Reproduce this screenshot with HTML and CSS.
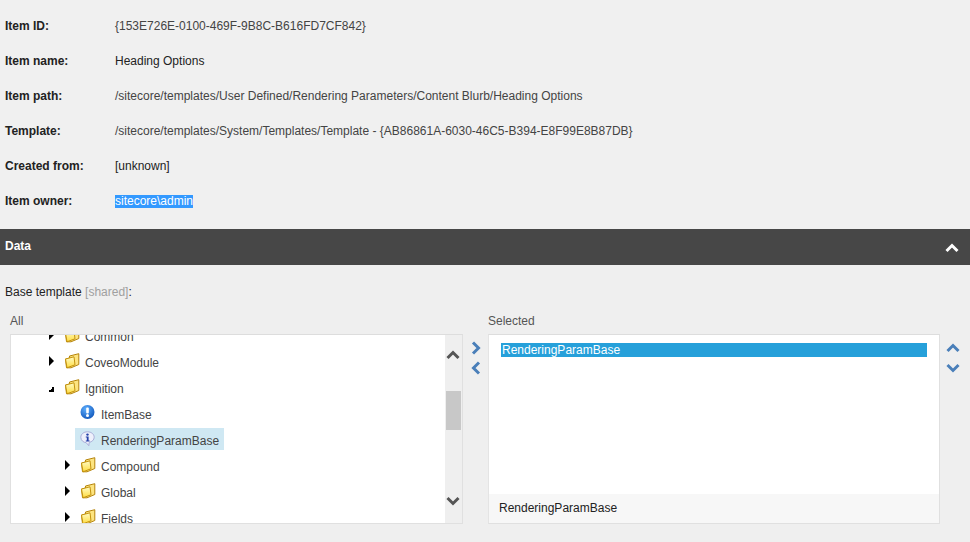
FILE: index.html
```html
<!DOCTYPE html>
<html lang="en">
<head>
<meta charset="utf-8">
<title>Heading Options</title>
<link rel="stylesheet" href="styles.css">
</head>
<body>
<svg class="defs" width="0" height="0" aria-hidden="true">
  <defs>
    <linearGradient id="fold" x1="0" y1="0" x2="0" y2="1"><stop offset="0" stop-color="#fffcc8"/><stop offset="1" stop-color="#ffdc3e"/></linearGradient>
    <symbol id="folder" viewBox="0 0 16 16">
      <path d="M1.500 6 5.500 5V3L14.800.700V11.500L7 14.800H2.500z" fill="#fde480" stroke="#b5840c"/>
      <path d="M1.500 6 10 3.800 11 11.800 3 14.800z" fill="url(#fold)" stroke="#c4920c"/>
    </symbol>
    <symbol id="chev-up" viewBox="0 0 14 10"><path d="M1.500 8 7 2.500 12.500 8" fill="none" stroke="currentColor" stroke-width="3"/></symbol>
    <symbol id="chev-down" viewBox="0 0 14 10"><path d="M1.500 2 7 7.500 12.500 2" fill="none" stroke="currentColor" stroke-width="3"/></symbol>
    <symbol id="chev-right" viewBox="0 0 10 14"><path d="M2 1.500 7.500 7 2 12.500" fill="none" stroke="currentColor" stroke-width="3"/></symbol>
    <symbol id="chev-left" viewBox="0 0 10 14"><path d="M8 1.500 2.500 7 8 12.500" fill="none" stroke="currentColor" stroke-width="3"/></symbol>
  </defs>
</svg>

<dl class="info">
  <div class="info-row"><dt>Item ID:</dt><dd class="muted">{153E726E-0100-469F-9B8C-B616FD7CF842}</dd></div>
  <div class="info-row"><dt>Item name:</dt><dd>Heading Options</dd></div>
  <div class="info-row"><dt>Item path:</dt><dd class="muted">/sitecore/templates/User Defined/Rendering Parameters/Content Blurb/Heading Options</dd></div>
  <div class="info-row"><dt>Template:</dt><dd class="muted">/sitecore/templates/System/Templates/Template - {AB86861A-6030-46C5-B394-E8F99E8B87DB}</dd></div>
  <div class="info-row"><dt>Created from:</dt><dd>[unknown]</dd></div>
  <div class="info-row"><dt>Item owner:</dt><dd><span class="selected-text">sitecore\admin</span></dd></div>
</dl>

<header class="section-bar">
  <span class="bar-title">Data</span>
  <svg class="bar-chevron"><use href="#chev-up"/></svg>
</header>

<section class="field">
  <div class="field-label">Base template <span class="shared">[shared]</span>:</div>
  <div class="picker">
    <div class="picker-heads">
      <div class="head-all">All</div>
      <div class="head-selected">Selected</div>
    </div>
    <div class="picker-body">
      <div class="box tree-box">
        <ul class="tree">
          <li class="node lvl1"><i class="arrow"></i><svg class="ico"><use href="#folder"/></svg><span>Common</span></li>
          <li class="node lvl1"><i class="arrow"></i><svg class="ico"><use href="#folder"/></svg><span>CoveoModule</span></li>
          <li class="node lvl1"><i class="arrow open"></i><svg class="ico"><use href="#folder"/></svg><span>Ignition</span></li>
          <li class="node lvl2 leaf">
            <svg class="ico" viewBox="0 0 16 16"><defs><radialGradient id="blue" cx=".4" cy=".3" r=".8"><stop offset="0" stop-color="#5fb0ff"/><stop offset="1" stop-color="#0a4fb5"/></radialGradient></defs><circle cx="7.500" cy="7" r="7" fill="url(#blue)"/><rect x="6.200" y="2.400" width="2.600" height="6" rx="1" fill="#fff"/><circle cx="7.500" cy="10.600" r="1.500" fill="#fff"/></svg>
            <span>ItemBase</span>
          </li>
          <li class="node lvl2 leaf current">
            <svg class="ico" viewBox="0 0 16 16"><path d="M7.500.800C3.600.800.800 3.200.800 6.300c0 3 2.600 5.200 5.400 5.400l2.600 3 .4-3.200c2.800-.7 5-2.700 5-5.200C14.200 3.200 11.400.800 7.500.800z" fill="#eef0fb" stroke="#a9aed8"/><circle cx="7.500" cy="3.600" r="1.200" fill="#2440a8"/><path d="M5.800 5.400h2.800v4.200h1v1H5.800v-1h1V6.400h-1z" fill="#2440a8"/></svg>
            <span>RenderingParamBase</span>
          </li>
          <li class="node lvl2"><i class="arrow"></i><svg class="ico"><use href="#folder"/></svg><span>Compound</span></li>
          <li class="node lvl2"><i class="arrow"></i><svg class="ico"><use href="#folder"/></svg><span>Global</span></li>
          <li class="node lvl2"><i class="arrow"></i><svg class="ico"><use href="#folder"/></svg><span>Fields</span></li>
        </ul>
        <div class="scrollbar">
          <svg class="scroll-btn"><use href="#chev-up"/></svg>
          <div class="track"><div class="thumb"></div></div>
          <svg class="scroll-btn"><use href="#chev-down"/></svg>
        </div>
      </div>
      <div class="transfer">
        <svg class="mini-v"><use href="#chev-right"/></svg>
        <svg class="mini-v"><use href="#chev-left"/></svg>
      </div>
      <div class="box selected-box">
        <div class="selected-list"><div class="selected-option">RenderingParamBase</div></div>
        <div class="selected-foot">RenderingParamBase</div>
      </div>
      <div class="order">
        <svg class="mini-h"><use href="#chev-up"/></svg>
        <svg class="mini-h"><use href="#chev-down"/></svg>
      </div>
    </div>
  </div>
</section>
</body>
</html>
```

FILE: styles.css
```css
* { box-sizing: border-box; }
html, body { height: 100%; }
body {
  margin: 0;
  overflow: hidden;
  background: #f0f0f0;
  color: #222;
  font: 12px/14px "Liberation Sans", Arial, sans-serif;
}
.defs { position: absolute; }

.info { margin: 0; padding: 8px 0 0 5px; height: 229px; }
.info-row { display: flex; height: 35px; align-items: center; }
.info dt { width: 110px; font-weight: bold; color: #222; }
.info dd { margin: 0; color: #222; }
.info dd.muted { color: #444; }
.selected-text { display: inline-block; background: #3399ff; color: #fff; height: 13px; line-height: 13px; margin-top: 1px; }

.section-bar {
  height: 36px;
  padding: 0 11px 0 5px;
  display: flex;
  align-items: center;
  justify-content: space-between;
  background: #474747;
  color: #fff;
  font-weight: bold;
}
.bar-title { margin-bottom: 2px; }
.bar-chevron { width: 14px; height: 10px; margin-top: 2px; color: #fff; }

.field { background: #efefef; height: 277px; padding-top: 20px; }
.field-label { padding-left: 5px; height: 14px; }
.shared { color: #a0a0a0; }

.picker { padding-left: 10px; }
.picker-heads { display: flex; padding-top: 15px; height: 35px; color: #555; }
.head-all { width: 478px; }

.picker-body { display: flex; height: 190px; }
.box { background: #fff; border: 1px solid #e0e0e0; border-top-color: #ddd; }

.tree-box { width: 453px; display: flex; overflow: hidden; }
.tree {
  list-style: none;
  margin: -11px 0 0;
  padding: 0;
  flex: 1;
  color: #444;
}
.node {
  display: flex;
  align-items: center;
  width: max-content;
  height: 22px;
  margin-bottom: 4px;
  padding-right: 5px;
}
.node span { margin-left: 5px; padding-top: 3px; }
.lvl1 { margin-left: 38px; }
.lvl2 { margin-left: 54px; }
.lvl2.leaf { margin-left: 64px; padding-left: 6px; }
.current { background: #cfe8f3; }

.arrow {
  width: 0;
  height: 0;
  margin-right: 11px;
  border-style: solid;
  border-width: 5px 0 5px 5px;
  border-color: transparent transparent transparent #000;
}
.arrow.open {
  width: 6px;
  height: 6px;
  border: 0;
  margin: 3px 11px 0 -1px;
  background: linear-gradient(135deg, transparent 50%, #000 50%);
}
.ico { width: 16px; height: 16px; flex: none; margin-top: -1px; margin-left: -1px; }

.scrollbar {
  width: 17px;
  background: #efefef;
  display: flex;
  flex-direction: column;
  color: #555;
}
.scroll-btn { width: 14px; height: 10px; margin: 15px 0 0 1px; flex: none; }
.scroll-btn:last-child { margin: 0 0 17px 1px; }
.track { flex: 1; padding-top: 31px; padding-left: 1px; }
.thumb { width: 15px; height: 39px; background: #c8c8c8; }

.transfer { width: 25px; padding: 7px 0 0 8px; display: flex; flex-direction: column; gap: 6px; color: #4a7fb9; }
.mini-v { width: 10px; height: 14px; }

.selected-box { width: 452px; display: flex; flex-direction: column; border-left-color: #e4e4e4; }
.selected-list { flex: 1; padding: 8px 12px 0 12px; }
.selected-option { height: 14px; line-height: 14px; padding-left: 1px; background: #26a0da; color: #fff; }
.selected-foot { height: 29px; line-height: 29px; padding-left: 10px; background: #f7f7f7; color: #222; }

.order { width: 30px; padding: 9px 0 0 6px; display: flex; flex-direction: column; gap: 10px; color: #4a7fb9; }
.mini-h { width: 14px; height: 10px; }
```
